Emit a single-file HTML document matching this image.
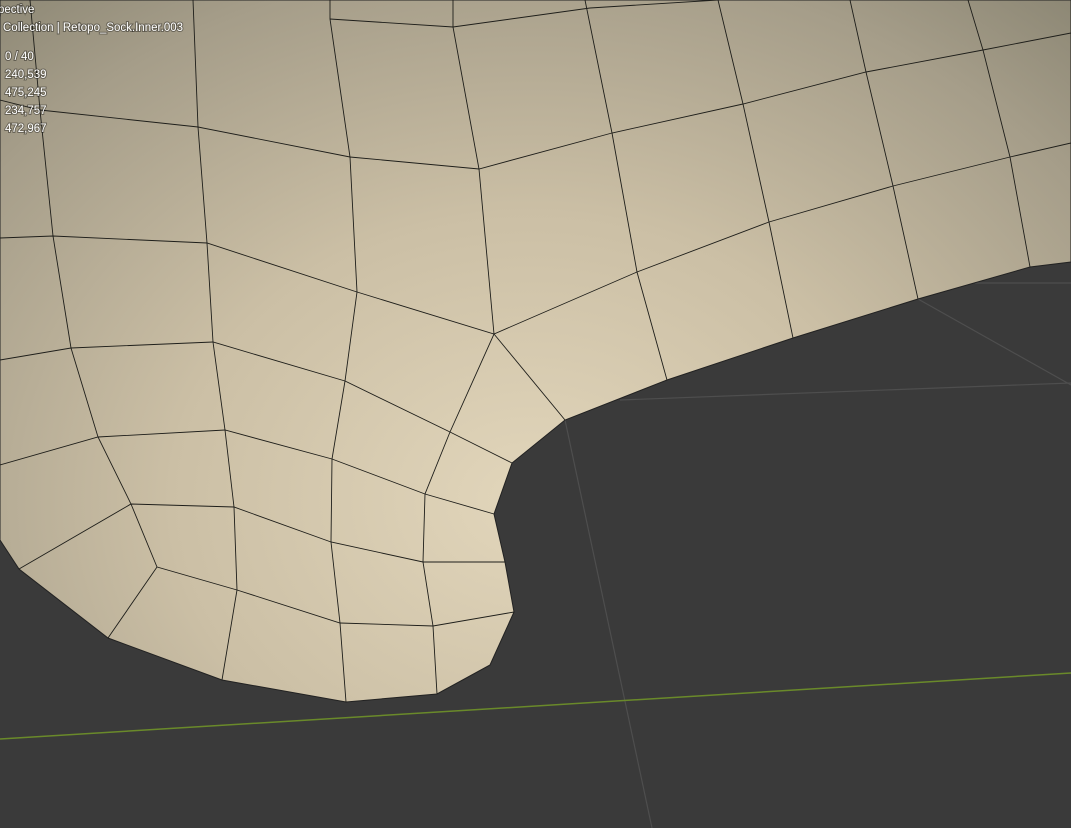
<!DOCTYPE html>
<html><head><meta charset="utf-8"><style>
html,body{margin:0;padding:0;background:#3a3a3a;overflow:hidden}
svg{display:block}
.t{font-family:"Liberation Sans",sans-serif;font-size:11.5px;fill:#fff}
</style></head><body>
<svg width="1071" height="828" viewBox="0 0 1071 828" xmlns="http://www.w3.org/2000/svg">
<defs>
<radialGradient id="g" cx="530" cy="500" r="720" gradientUnits="userSpaceOnUse" gradientTransform="translate(530 500) scale(1.25 1) translate(-530 -500)">
<stop offset="0" stop-color="#e2d6bb"/>
<stop offset="0.4" stop-color="#cbbfa5"/>
<stop offset="0.75" stop-color="#a59d89"/>
<stop offset="1" stop-color="#817d6b"/>
</radialGradient>
</defs>
<rect width="1071" height="828" fill="#3a3a3a"/>
<g stroke="#4e4e4e" stroke-width="1.2" fill="none">
<path d="M565,420 L652,828"/>
<path d="M620,400 L1071,383"/>
<path d="M918,299 L1071,385"/>
<path d="M975,283 L1071,283"/>
</g>
<path d="M0,739 L1071,673" stroke="#6a8a2a" stroke-width="1.5" fill="none"/>
<path d="M0,0 L1071,0 L1071,262 L1030,267 L918,299 L793,338 L667,380 L565,420 L512,463 L494,514 L505,562 L514,612 L490,665 L437,694 L346,702 L222,680 L108,638 L19,569 L0,540 Z" fill="url(#g)" stroke="#222" stroke-width="1"/>
<g stroke="#1e1e1a" stroke-width="0.9" fill="none">
<path d="M330,19 L453,27 L590,8 L718,0"/>
<path d="M0,100 L40,110 L198,127 L350,157 L479,169 L612,133 L743,104 L866,72 L983,50 L1071,33"/>
<path d="M0,238 L53,236 L207,243 L357,292 L494,334 L637,272 L769,222 L893,186 L1010,157 L1071,143"/>
<path d="M0,360 L71,348 L213,342 L345,381 L450,432 L512,463"/>
<path d="M0,465 L98,437 L225,430 L332,459 L425,494 L494,514"/>
<path d="M19,569 L131,504 L234,507 L331,542 L423,562 L505,562"/>
<path d="M108,638 L157,567 L237,590 L340,623 L433,626 L514,612"/>
<path d="M193,0 L198,127 L207,243 L213,342 L225,430 L234,507 L237,590 L222,680"/>
<path d="M30,0 L40,110 L53,236 L71,348 L98,437 L131,504 L157,567"/>
<path d="M330,0 L330,19 L350,157 L357,292 L345,381 L332,459 L331,542 L340,623 L346,702"/>
<path d="M453,0 L453,27 L479,169 L494,334 L450,432 L425,494 L423,562 L433,626 L437,694"/>
<path d="M585,0 L612,133 L637,272 L667,380"/>
<path d="M718,0 L743,104 L769,222 L793,338"/>
<path d="M850,0 L866,72 L893,186 L918,299"/>
<path d="M968,0 L983,50 L1010,157 L1030,267"/>
<path d="M494,334 L565,420"/>
</g>
<g class="t" style="paint-order:stroke" stroke="rgba(0,0,0,0.35)" stroke-width="2">
<text x="-2" y="13">pective</text>
<text x="3" y="31">Collection | Retopo_Sock.Inner.003</text>
<text x="5" y="60">0 / 40</text>
<text x="5" y="78">240,539</text>
<text x="5" y="96">475,245</text>
<text x="5" y="114">234,757</text>
<text x="5" y="132">472,967</text>
</g>
</svg>
</body></html>
